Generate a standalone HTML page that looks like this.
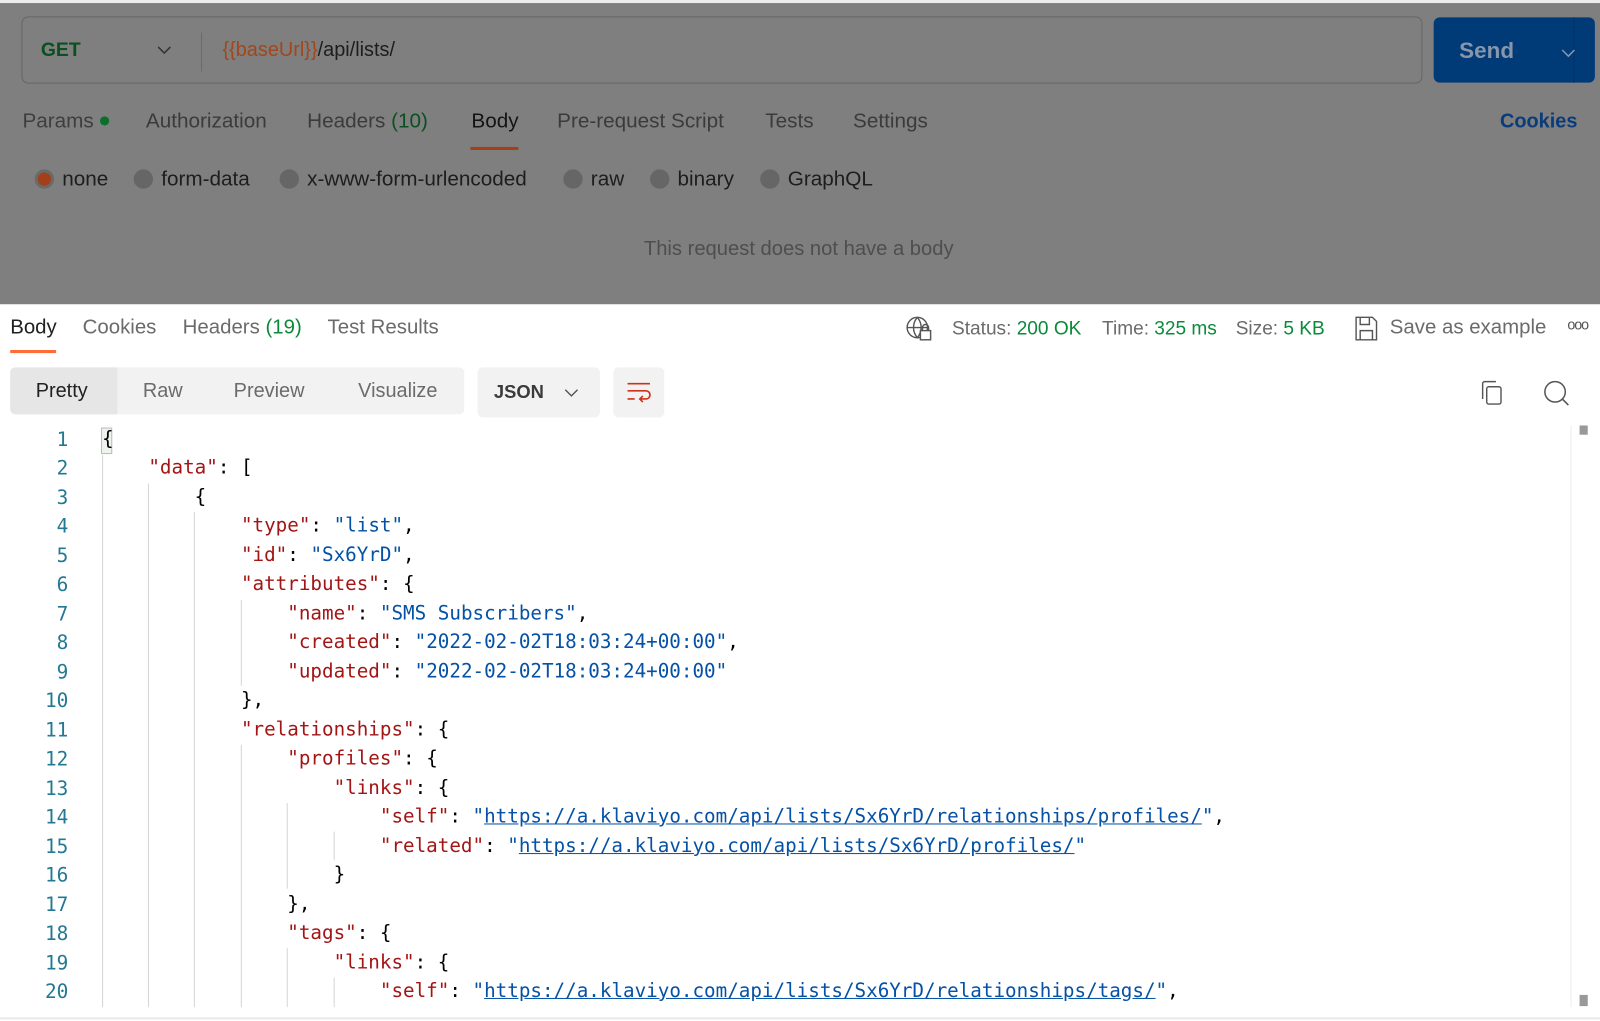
<!DOCTYPE html>
<html><head><meta charset="utf-8"><style>
*{margin:0;padding:0;box-sizing:border-box}
body{width:1600px;height:1021px;overflow:hidden;background:#fff;font-family:"Liberation Sans",sans-serif;position:relative}
#w{position:absolute;left:0;top:0;width:1568px;height:1001px;transform:scale(1.0204);transform-origin:0 0}
.a{position:absolute;white-space:nowrap}
#top{position:absolute;left:0;top:0;width:1568px;height:298px;background:#7f7f7f;border-top:3px solid #ececec}
.t{font-size:20.3px;color:#3b3b3b}
.code{position:absolute;left:0;top:417px;font-family:"DejaVu Sans Mono","Liberation Mono",monospace;font-size:18.85px}
.ln{position:absolute;width:67px;text-align:right;color:#237893;font-size:19px}
.cl{position:absolute;left:100px;white-space:pre;color:#000}
.k{color:#a31515}.s{color:#0451a5}.u{color:#0451a5;text-decoration:underline}
.g{position:absolute;width:1px;background:#d5d5d5}
.rd{display:inline-block;width:19px;height:19px;border-radius:50%;background:#666;vertical-align:-3px;margin-right:8px}
.r{font-size:20px;color:#6b6b6b}
</style></head><body><div id="w">
<div id="top">
 <div class="a" style="left:21px;top:13px;width:1373px;height:66px;border:1.5px solid #666;border-radius:7px"></div>
 <div class="a" style="left:40px;top:36px;font-size:19px;font-weight:bold;color:#0b5020">GET</div>
 <svg class="a" style="left:153px;top:41px" width="16" height="10"><path d="M2 2l6 6 6-6" stroke="#333" stroke-width="1.5" fill="none"/></svg>
 <div class="a" style="left:197px;top:29px;width:1px;height:38px;background:#6a6a6a"></div>
 <div class="a" style="left:218px;top:35px;font-size:19.5px;color:#1d1d1d"><span style="color:#a3461a">{{baseUrl}}</span>/api/lists/</div>
 <div class="a" style="left:1405px;top:14px;width:158px;height:64px;background:#003b78;border-radius:6px"></div>
 <div class="a" style="left:1542px;top:14px;width:1px;height:64px;background:#002f60"></div>
 <div class="a" style="left:1430px;top:34px;font-size:22px;font-weight:bold;color:#8796ab">Send</div>
 <svg class="a" style="left:1529px;top:44px" width="16" height="10"><path d="M2 2l6 6 6-6" stroke="#8796ab" stroke-width="1.5" fill="none"/></svg>
 <div class="a t" style="left:22px;top:105px;color:#3e3e3e">Params <span style="display:inline-block;width:9px;height:9px;border-radius:50%;background:#0a6f2a;vertical-align:2px"></span></div>
 <div class="a t" style="left:143px;top:105px">Authorization</div>
 <div class="a t" style="left:301px;top:105px">Headers <span style="color:#0b5020">(10)</span></div>
 <div class="a t" style="left:462px;top:105px;color:#141414">Body</div>
 <div class="a" style="left:461px;top:141px;width:47px;height:3px;background:#a3401a"></div>
 <div class="a t" style="left:546px;top:105px">Pre-request Script</div>
 <div class="a t" style="left:750px;top:105px">Tests</div>
 <div class="a t" style="left:836px;top:105px">Settings</div>
 <div class="a" style="left:1470px;top:105px;font-size:19.5px;font-weight:bold;color:#0a3c7a">Cookies</div>
 <div class="a t" style="left:34px;top:162px;color:#1d1d1d"><span class="rd" style="background:#a3401a;border:3px solid #6a6a6a"></span>none</div>
 <div class="a t" style="left:131px;top:162px;color:#1d1d1d"><span class="rd"></span>form-data</div>
 <div class="a t" style="left:274px;top:162px;color:#1d1d1d"><span class="rd"></span>x-www-form-urlencoded</div>
 <div class="a t" style="left:552px;top:162px;color:#1d1d1d"><span class="rd"></span>raw</div>
 <div class="a t" style="left:637px;top:162px;color:#1d1d1d"><span class="rd"></span>binary</div>
 <div class="a t" style="left:745px;top:162px;color:#1d1d1d"><span class="rd"></span>GraphQL</div>
 <div class="a" style="left:631px;top:230px;font-size:19.8px;color:#4e4e4e">This request does not have a body</div>
</div>
<div class="a" style="left:0;top:298px;width:1568px;height:1px;background:#e0e0e0"></div>
<div class="a" style="left:10px;top:310px;font-size:20px;color:#212121">Body</div>
<div class="a" style="left:10px;top:343px;width:45px;height:3px;background:#ff6c37"></div>
<div class="a r" style="left:81px;top:310px">Cookies</div>
<div class="a r" style="left:179px;top:310px">Headers <span style="color:#0b8a3a">(19)</span></div>
<div class="a r" style="left:321px;top:310px">Test Results</div>
<svg class="a" style="left:887px;top:309px" width="28" height="26" fill="none" stroke="#555" stroke-width="1.4"><circle cx="12" cy="12" r="10"/><path d="M2 12h20M12 2c-5 6-5 14 0 20M12 2c5 6 5 14 0 20"/><rect x="15" y="15" width="10" height="9" fill="#fff"/><path d="M17 15v-3a3 3 0 016 0v3"/></svg>
<div class="a" style="left:933px;top:311px;font-size:18.7px;color:#6b6b6b">Status: <span style="color:#0b8a3a">200 OK</span></div>
<div class="a" style="left:1080px;top:311px;font-size:18.7px;color:#6b6b6b">Time: <span style="color:#0b8a3a">325 ms</span></div>
<div class="a" style="left:1211px;top:311px;font-size:18.7px;color:#6b6b6b">Size: <span style="color:#0b8a3a">5 KB</span></div>
<svg class="a" style="left:1327px;top:309px" width="24" height="26" fill="none" stroke="#555" stroke-width="1.4"><path d="M2 2h16l4 4v18H2z"/><path d="M6 2v7h9V2M6 24v-9h12v9"/></svg>
<div class="a r" style="left:1362px;top:310px">Save as example</div>
<div class="a" style="left:1536px;top:310px;font-size:14px;color:#555;letter-spacing:-1px">ooo</div>
<div class="a" style="left:10px;top:360px;width:445px;height:46px;background:#f2f2f2;border-radius:5px"></div>
<div class="a" style="left:10px;top:360px;width:105px;height:46px;background:#e6e6e6;border-radius:5px 0 0 5px"></div>
<div class="a" style="left:35px;top:372px;font-size:19.5px;color:#212121">Pretty</div>
<div class="a r" style="left:140px;top:372px;font-size:19.5px">Raw</div>
<div class="a r" style="left:229px;top:372px;font-size:19.5px">Preview</div>
<div class="a r" style="left:351px;top:372px;font-size:19.5px">Visualize</div>
<div class="a" style="left:468px;top:360px;width:120px;height:49px;background:#f2f2f2;border-radius:5px"></div>
<div class="a" style="left:484px;top:374px;font-size:18px;font-weight:bold;color:#3b3b3b">JSON</div>
<svg class="a" style="left:552px;top:380px" width="16" height="10"><path d="M2 2l6 6 6-6" stroke="#555" stroke-width="1.4" fill="none"/></svg>
<div class="a" style="left:601px;top:360px;width:50px;height:49px;background:#f2f2f2;border-radius:5px"></div>
<svg class="a" style="left:613px;top:373px" width="26" height="22" fill="none" stroke="#d0311c" stroke-width="1.6"><path d="M2 3h22M2 10h18a4 4 0 010 8h-5M2 18h7M17 15l-3 3 3 3"/></svg>
<svg class="a" style="left:1450px;top:372px" width="24" height="26" fill="none" stroke="#555" stroke-width="1.4"><rect x="7" y="7" width="14" height="17" rx="2"/><path d="M3 19V4a2 2 0 012-2h11"/></svg>
<svg class="a" style="left:1512px;top:372px" width="27" height="27" fill="none" stroke="#555" stroke-width="1.5"><circle cx="12" cy="12" r="10"/><path d="M19 19l6 6"/></svg>
<div class="a" style="left:1539px;top:417px;width:1px;height:570px;background:#ececec"></div>
<div class="a" style="left:1548px;top:417px;width:8px;height:9px;background:#999"></div>
<div class="a" style="left:1548px;top:975px;width:8px;height:11px;background:#999"></div>
<div class="a" style="left:0;top:997px;width:1568px;height:2px;background:#eaeaea"></div>
<div class="a" style="left:99px;top:419px;width:11px;height:26px;background:#eef3ee;border:1px solid #bbb"></div>
<div class="g" style="left:100px;top:446px;height:541px"></div>
<div class="g" style="left:145px;top:474px;height:513px"></div>
<div class="g" style="left:190px;top:502px;height:485px"></div>
<div class="g" style="left:236px;top:588px;height:84px"></div>
<div class="g" style="left:236px;top:730px;height:257px"></div>
<div class="g" style="left:281px;top:787px;height:84px"></div>
<div class="g" style="left:327px;top:815px;height:28px"></div>
<div class="g" style="left:281px;top:929px;height:58px"></div>
<div class="g" style="left:327px;top:958px;height:29px"></div>
<div class="code">
<div class="ln" style="top:3px">1</div><div class="cl" style="top:3px">{</div>
<div class="ln" style="top:31px">2</div><div class="cl" style="top:31px">    <span class="k">"data"</span>: [</div>
<div class="ln" style="top:60px">3</div><div class="cl" style="top:60px">        {</div>
<div class="ln" style="top:88px">4</div><div class="cl" style="top:88px">            <span class="k">"type"</span>: <span class="s">"list"</span>,</div>
<div class="ln" style="top:117px">5</div><div class="cl" style="top:117px">            <span class="k">"id"</span>: <span class="s">"Sx6YrD"</span>,</div>
<div class="ln" style="top:145px">6</div><div class="cl" style="top:145px">            <span class="k">"attributes"</span>: {</div>
<div class="ln" style="top:174px">7</div><div class="cl" style="top:174px">                <span class="k">"name"</span>: <span class="s">"SMS Subscribers"</span>,</div>
<div class="ln" style="top:202px">8</div><div class="cl" style="top:202px">                <span class="k">"created"</span>: <span class="s">"2022-02-02T18:03:24+00:00"</span>,</div>
<div class="ln" style="top:231px">9</div><div class="cl" style="top:231px">                <span class="k">"updated"</span>: <span class="s">"2022-02-02T18:03:24+00:00"</span></div>
<div class="ln" style="top:259px">10</div><div class="cl" style="top:259px">            },</div>
<div class="ln" style="top:288px">11</div><div class="cl" style="top:288px">            <span class="k">"relationships"</span>: {</div>
<div class="ln" style="top:316px">12</div><div class="cl" style="top:316px">                <span class="k">"profiles"</span>: {</div>
<div class="ln" style="top:345px">13</div><div class="cl" style="top:345px">                    <span class="k">"links"</span>: {</div>
<div class="ln" style="top:373px">14</div><div class="cl" style="top:373px">                        <span class="k">"self"</span>: <span class="s">"<span class="u">https://a.klaviyo.com/api/lists/Sx6YrD/relationships/profiles/</span>"</span>,</div>
<div class="ln" style="top:402px">15</div><div class="cl" style="top:402px">                        <span class="k">"related"</span>: <span class="s">"<span class="u">https://a.klaviyo.com/api/lists/Sx6YrD/profiles/</span>"</span></div>
<div class="ln" style="top:430px">16</div><div class="cl" style="top:430px">                    }</div>
<div class="ln" style="top:459px">17</div><div class="cl" style="top:459px">                },</div>
<div class="ln" style="top:487px">18</div><div class="cl" style="top:487px">                <span class="k">"tags"</span>: {</div>
<div class="ln" style="top:516px">19</div><div class="cl" style="top:516px">                    <span class="k">"links"</span>: {</div>
<div class="ln" style="top:544px">20</div><div class="cl" style="top:544px">                        <span class="k">"self"</span>: <span class="s">"<span class="u">https://a.klaviyo.com/api/lists/Sx6YrD/relationships/tags/</span>"</span>,</div>
</div>
</div></body></html>
